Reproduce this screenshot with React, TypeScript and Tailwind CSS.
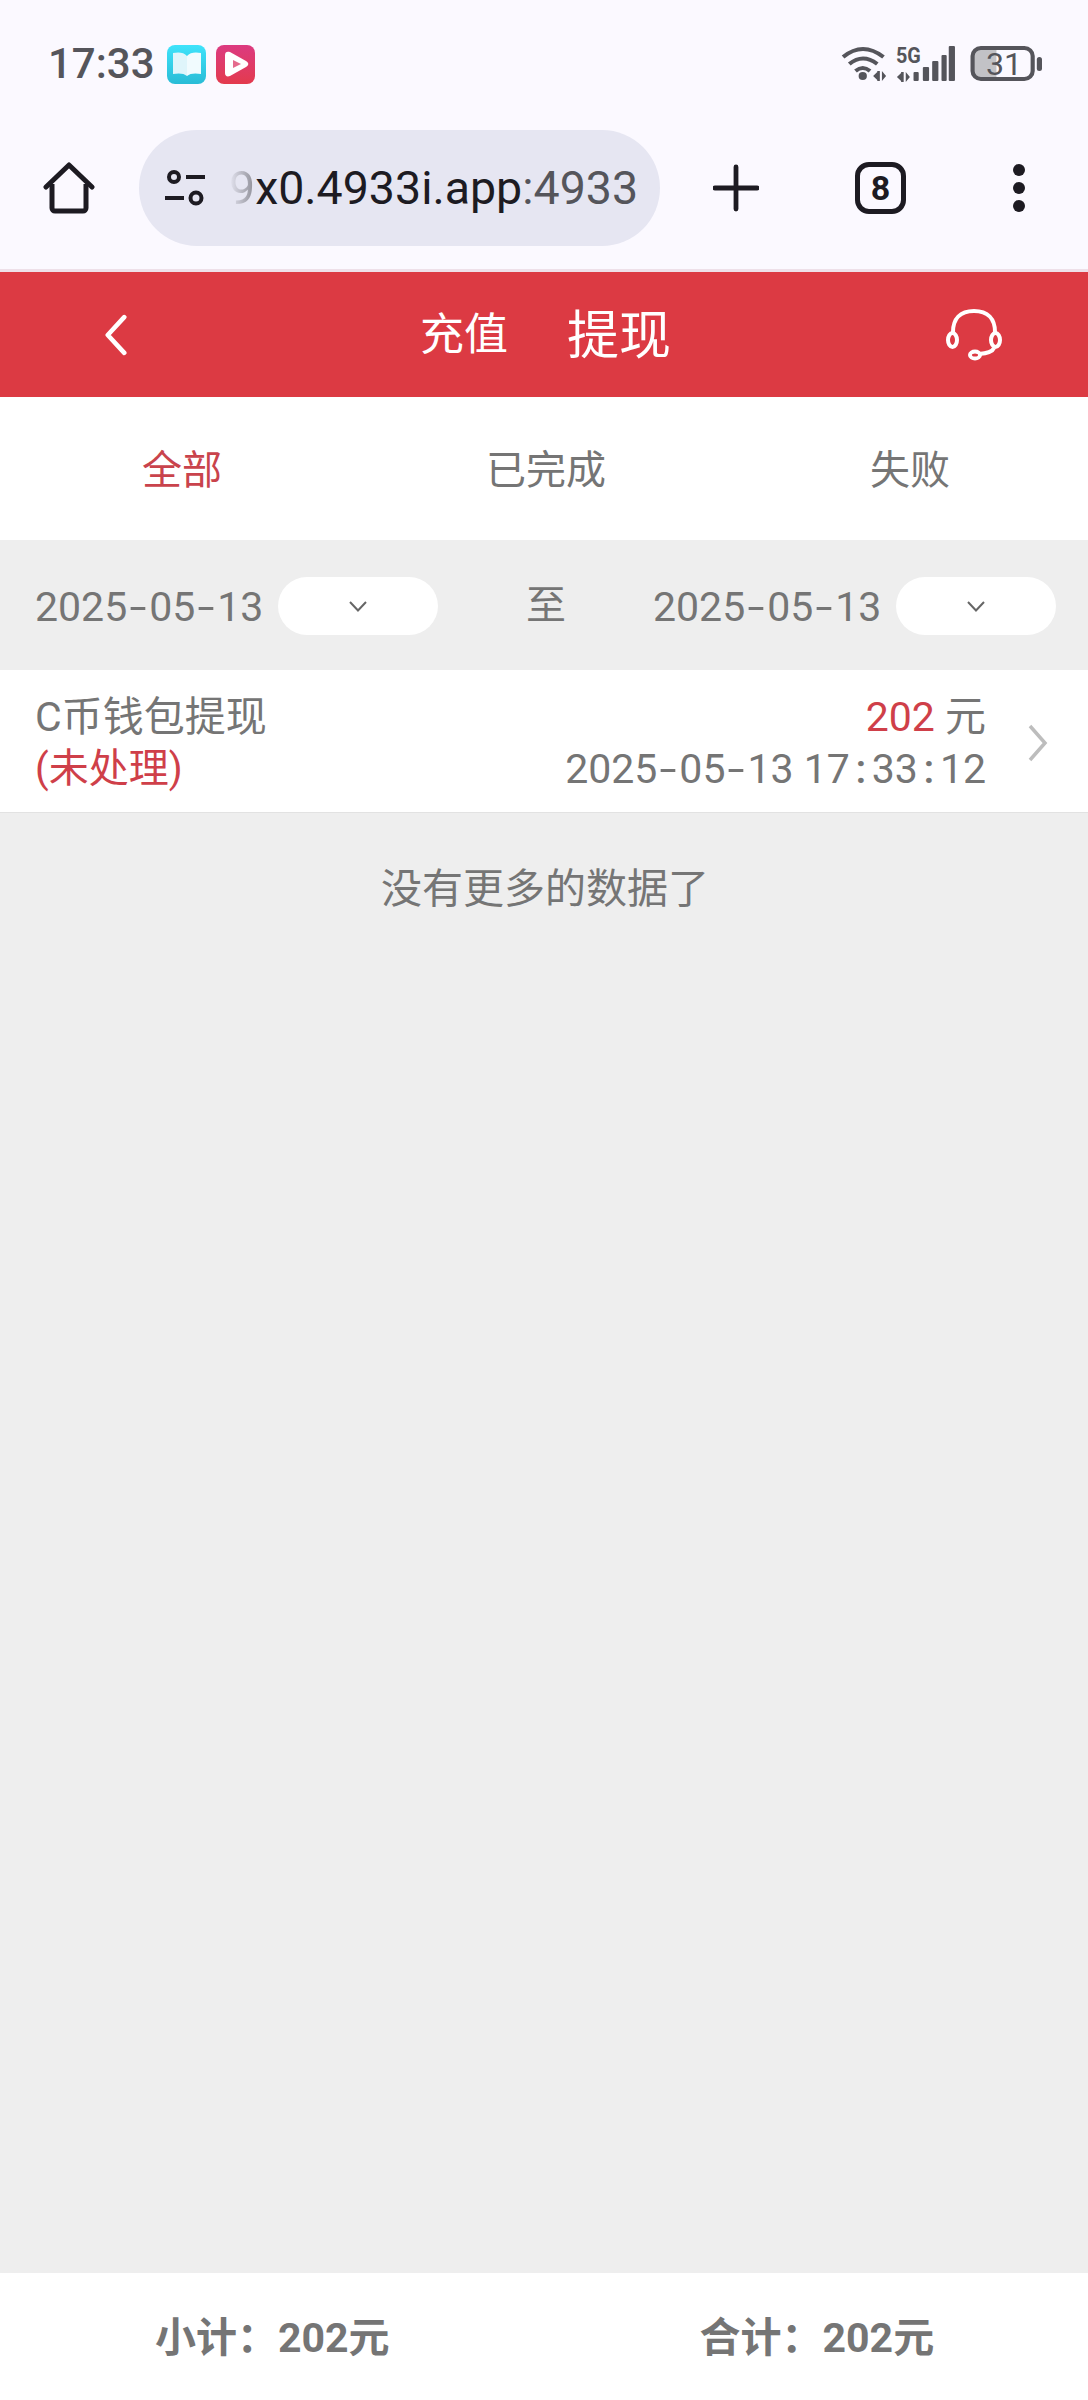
function StatusIcons() {
  return (
    <svg className="overflow-visible" width="201" height="40" viewBox="0 0 194 40" fill="none" preserveAspectRatio="none">
      {/* wifi */}
      <path d="M2 13Q21 -3 41 13" stroke="#55555b" strokeWidth="4" />
      <path d="M8 20Q21 9 35 20" stroke="#55555b" strokeWidth="4" />
      <path d="M14 27Q21 21 28 27" stroke="#55555b" strokeWidth="4" />
      <circle cx="21" cy="32" r="4" fill="#55555b" />
      <path d="M35 27v10h2.500v-10zM31 32l4-4v8zM39.500 27v10l4-5z" fill="#55555b" />
      {/* 5G + bars */}
      <text x="53" y="19" fontFamily="Roboto" fontWeight="700" fontSize="22" fill="#55555b" textLength="24" lengthAdjust="spacingAndGlyphs">5G</text>
      <path d="M58 28v10h2.500v-10zM54 33l4-4v8zM62.500 28v10l4-5z" fill="#55555b" />
      <rect x="70" y="28" width="5" height="9" rx="1" fill="#55555b" />
      <rect x="79" y="23" width="6" height="14" rx="1" fill="#55555b" />
      <rect x="88" y="17" width="6" height="20" rx="1" fill="#55555b" />
      <rect x="97" y="11" width="5" height="26" rx="1" fill="#55555b" />
      <rect x="104" y="2" width="6" height="35" rx="1" fill="#55555b" />
      {/* battery */}
      <path d="M150 4H135a8 8 0 0 0-8 8V27a8 8 0 0 0 8 8H150z" fill="#c2c2c6" />
      <rect x="127" y="4" width="58" height="31" rx="8" stroke="#55555b" strokeWidth="4" />
      <rect x="189" y="13" width="5" height="14" rx="2.500" fill="#55555b" />
      <text x="140" y="31" fontFamily="Roboto" fontSize="31" fill="#55555b">31</text>
    </svg>
  );
}

// the phone's font sets - and : much wider than Roboto does
function Stamp({ value }: { value: string }) {
  return (
    <span>
      {value.split("").map((ch, i) =>
        ch === "-" ? (
          <span key={i} className="inline-block w-[22px] text-center scale-x-[1.5]">-</span>
        ) : ch === ":" ? (
          <span key={i} className="inline-block w-[22px] text-center font-medium">:</span>
        ) : (
          ch
        )
      )}
    </span>
  );
}

function DateFilter({ className }: { className?: string }) {
  return (
    <div className={`flex items-center ${className ?? ""}`}>
      <span className="w-[243px] mt-[4px] text-[41px] whitespace-nowrap"><Stamp value="2025-05-13" /></span>
      <div className="w-[160px] h-[58px] rounded-full bg-white flex items-center justify-center">
        <svg width="20" height="11" viewBox="0 0 20 11" fill="none">
          <path d="M2 1L10 9.500L18 1" stroke="#666" strokeWidth="2" />
        </svg>
      </div>
    </div>
  );
}

export default function App() {
  return (
    <div className="w-[1088px] h-[2400px] flex flex-col bg-[#eeeeee] text-[#757575] text-[41px] font-[Roboto,'Noto_Sans_CJK_SC',sans-serif]">
      {/* status bar + browser toolbar */}
      <div className="h-[272px] shrink-0 bg-[#fbf9ff] border-b-[3px] border-[#eee0e9] pt-[44px]">
        <div className="h-[40px] flex items-center pl-[48px]">
          <span className="w-[119px] text-[42px] font-medium text-[#55555b] leading-[40px]">17:33</span>
          <div className="w-[39px] h-[39px] rounded-[8px] bg-gradient-to-b from-[#3fe3fb] to-[#29bcd6] flex items-center justify-center">
            <svg width="30" height="26" viewBox="0 0 30 26">
              <path d="M15 5C12 1 6 1 1 2V23C6 22 12 22 15 25Z" fill="#dff5fb" />
              <path d="M15 5C18 1 24 1 29 2V23C24 22 18 22 15 25Z" fill="#f1fbfe" />
            </svg>
          </div>
          <div className="w-[39px] h-[39px] ml-[10px] rounded-[8px] bg-gradient-to-b from-[#dc3a80] to-[#e33a4c] flex items-center justify-center">
            <svg width="26" height="28" viewBox="0 0 26 28">
              <path d="M2 5C2 2 4 1 7 2L23 11C26 13 26 15 23 17L7 26C4 27 2 26 2 23Z" fill="#fff" />
              <path d="M10 10L18 14L10 18Z" fill="#e56a8c" />
            </svg>
          </div>
          <div className="ml-auto mr-[46px]">
            <StatusIcons />
          </div>
        </div>
        <div className="flex items-center h-[116px] mt-[46px] pl-[43px]">
          <svg width="52" height="52" viewBox="0 0 50 52" fill="none">
            <path d="M2 25L25 3L48 25" stroke="#1d1b22" strokeWidth="5" strokeLinecap="round" strokeLinejoin="round" />
            <path d="M8 22V46a3 3 0 0 0 3 3H39a3 3 0 0 0 3-3V22" stroke="#1d1b22" strokeWidth="5" />
          </svg>
          <div className="w-[521px] h-[116px] ml-[44px] rounded-full bg-[#e6e6f2] flex items-center pl-[24px]">
            <svg width="44" height="36" viewBox="0 0 42 36" fill="none">
              <circle cx="10" cy="7" r="5" stroke="#1d1b22" strokeWidth="4" />
              <path d="M22 7H41" stroke="#1d1b22" strokeWidth="4" />
              <path d="M1 28H20" stroke="#1d1b22" strokeWidth="4" />
              <circle cx="32" cy="28" r="5.500" stroke="#1d1b22" strokeWidth="4" />
            </svg>
            <span className="ml-[22px] text-[46.500px] leading-[60px] whitespace-nowrap text-[#1d1b22]">
              <span className="bg-gradient-to-r from-[#e6e6f2] to-[#8d8d96] bg-clip-text text-transparent">9</span>
              x0.4933i.app<span className="text-[#55555b]">:4933</span>
            </span>
          </div>
          <svg className="ml-[53px]" width="46" height="48" viewBox="0 0 48 48" fill="none">
            <path d="M2 24H46M24 2V46" stroke="#1d1b22" strokeWidth="5" strokeLinecap="round" />
          </svg>
          <div className="w-[51px] h-[52px] ml-[96px] rounded-[14px] border-[5px] border-[#1d1b22] flex items-center justify-center text-[34px] font-bold text-[#1d1b22]">8</div>
          <div className="ml-[107px] flex flex-col gap-[6px]">
            <span className="w-[12px] h-[12px] rounded-full bg-[#1d1b22]" />
            <span className="w-[12px] h-[12px] rounded-full bg-[#1d1b22]" />
            <span className="w-[12px] h-[12px] rounded-full bg-[#1d1b22]" />
          </div>
        </div>
      </div>

      {/* red title bar */}
      <div className="h-[125px] shrink-0 bg-[#dc3a43] flex items-center text-white">
        <svg className="ml-[105px]" width="22" height="44" viewBox="0 0 24 44" fill="none">
          <path d="M21 2.500L3 22L21 41.500" stroke="#fff" strokeWidth="5" strokeLinecap="round" strokeLinejoin="round" />
        </svg>
        <span className="ml-[293px] text-[44px] leading-[60px]">充值</span>
        <span className="ml-[59px] mt-[5px] text-[52px] leading-[60px]">提现</span>
        <svg className="ml-[275px]" width="56" height="52" viewBox="0 0 56 52" fill="none">
          <path d="M7 23C7 10 14 2 28 2C42 2 49 10 49 23" stroke="#fff" strokeWidth="4" />
          <ellipse cx="6.500" cy="31" rx="4.500" ry="7" stroke="#fff" strokeWidth="4" />
          <ellipse cx="49.500" cy="31" rx="4.500" ry="7" stroke="#fff" strokeWidth="4" />
          <path d="M48 39Q46 44 33 45" stroke="#fff" strokeWidth="4" />
          <ellipse cx="29" cy="46" rx="5" ry="3.500" stroke="#fff" strokeWidth="4" />
        </svg>
      </div>

      {/* status tabs */}
      <div className="h-[143px] shrink-0 bg-white flex items-center pt-[5px] pl-[142px] text-[40px]">
        <span className="text-[#c9434c]">全部</span>
        <span className="ml-[264px]">已完成</span>
        <span className="ml-[264px]">失败</span>
      </div>

      {/* date range */}
      <div className="h-[130px] shrink-0 flex items-center pt-[2px] pl-[35px]">
        <DateFilter />
        <span className="ml-[88px] mb-[1px] text-[40px]">至</span>
        <DateFilter className="ml-[87px]" />
      </div>

      {/* record */}
      <div className="h-[143px] shrink-0 bg-white border-b border-[#e2e2e2] flex items-start pt-[21px] pl-[35px] leading-[52px]">
        <div>
          <div>C币钱包提现</div>
          <div className="text-[#cf3f49] text-[40px]">(未处理)</div>
        </div>
        <div className="ml-auto text-right whitespace-nowrap">
          <div><span className="text-[#cf3f49]">202</span> 元</div>
          <div><Stamp value="2025-05-13 17:33:12" /></div>
        </div>
        <svg className="ml-[42px] mr-[40px] mt-[33px]" width="20" height="38" viewBox="0 0 20 38" fill="none">
          <path d="M2 2L17 19L2 36" stroke="#bdbdbd" strokeWidth="3.500" />
        </svg>
      </div>

      <div className="flex-1 pt-[50px] pl-[2px] text-center leading-[52px]">没有更多的数据了</div>

      {/* totals */}
      <div className="h-[127px] shrink-0 bg-white flex items-center pt-[5px] pl-[155px] font-bold text-[41px]">
        <span>小计：202元</span>
        <span className="ml-[310px]">合计：202元</span>
      </div>
    </div>
  );
}
